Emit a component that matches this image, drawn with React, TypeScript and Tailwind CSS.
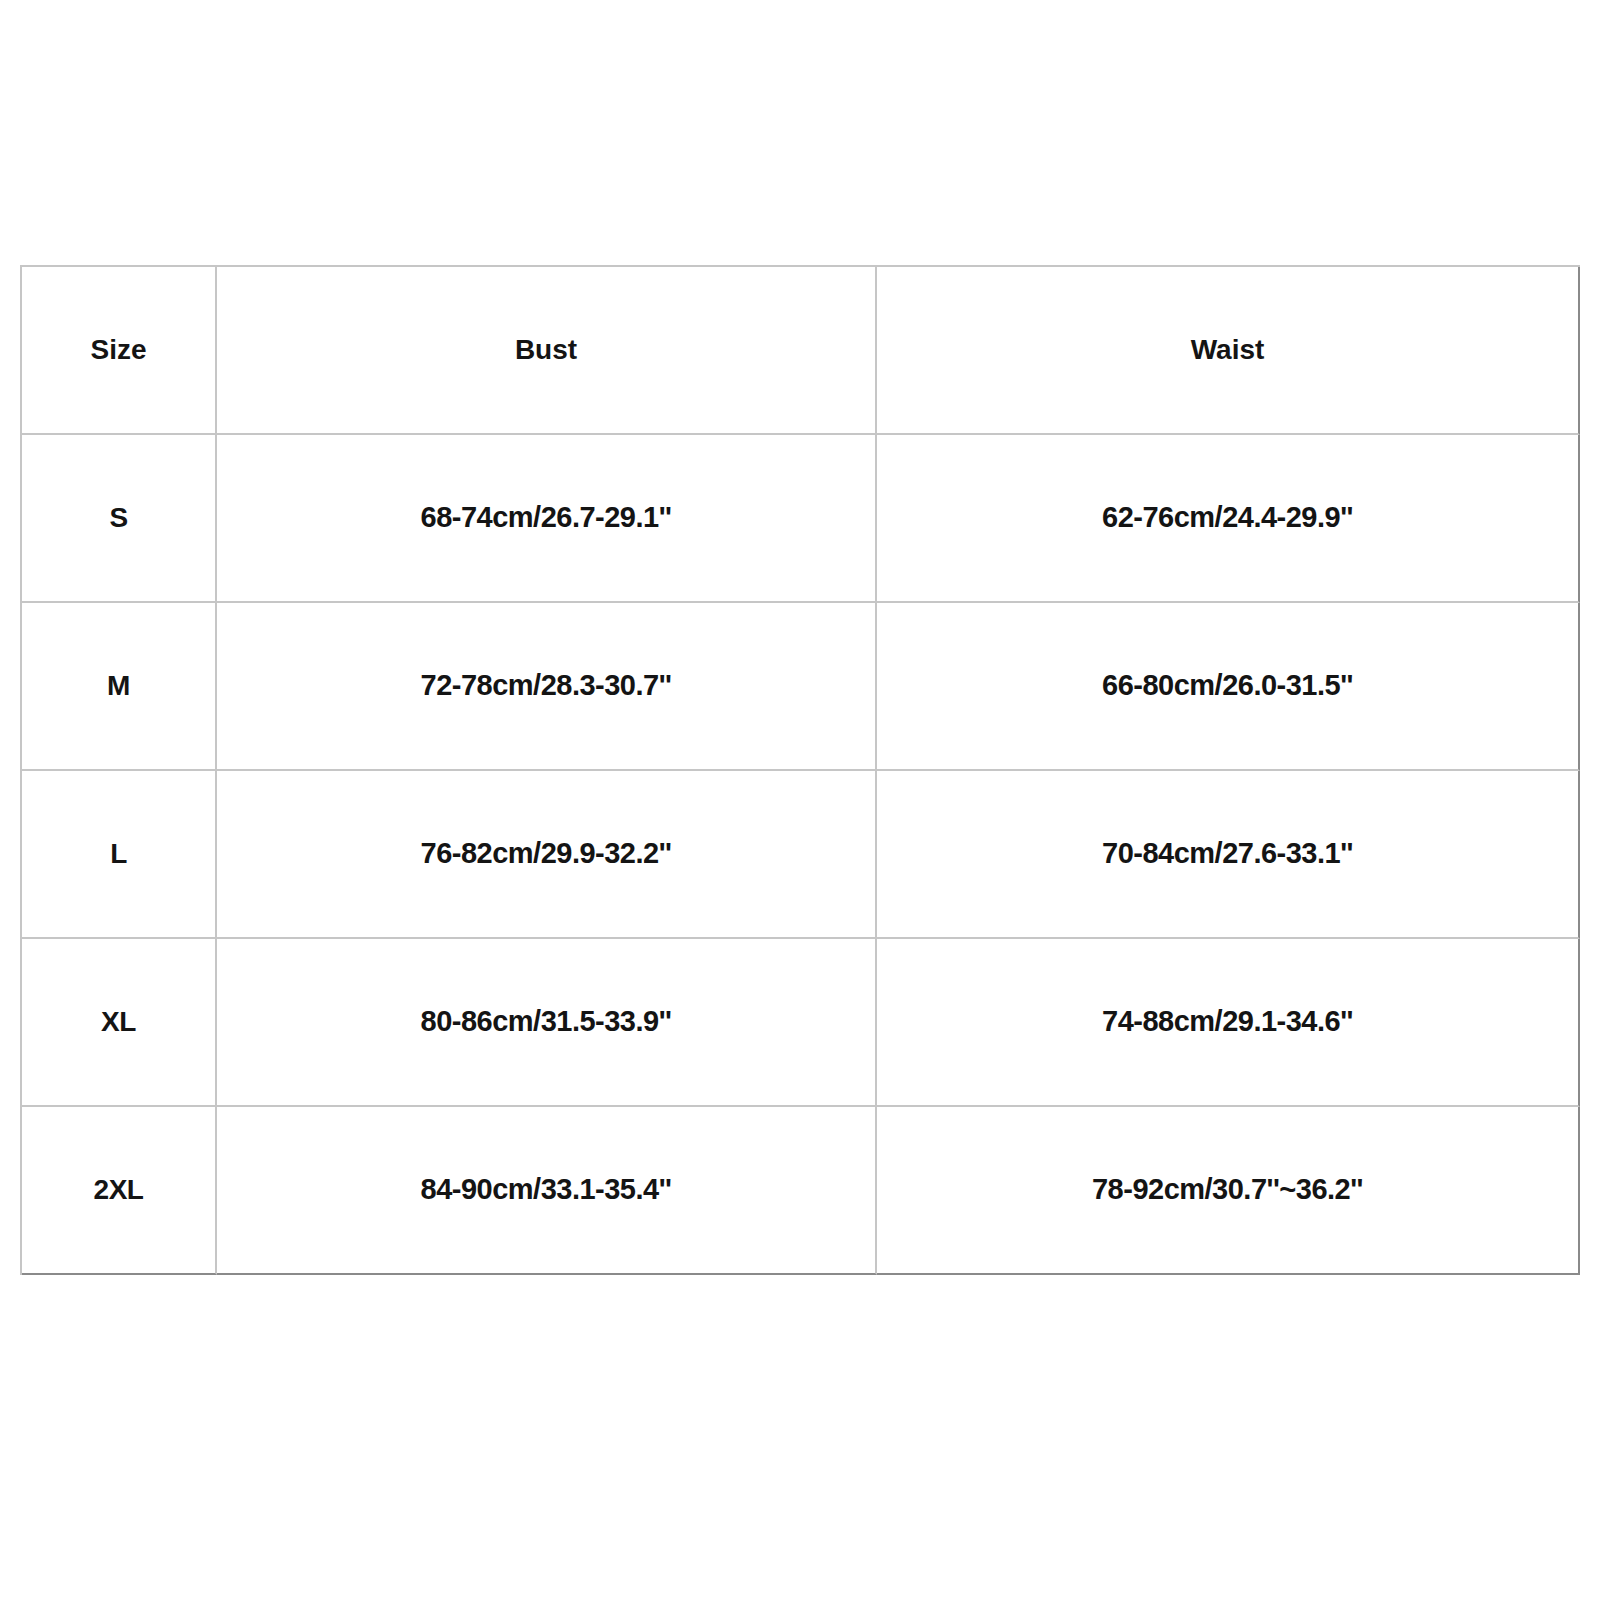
const rows = [
  { size: "S", bust: "68-74cm/26.7-29.1''", waist: "62-76cm/24.4-29.9''" },
  { size: "M", bust: "72-78cm/28.3-30.7''", waist: "66-80cm/26.0-31.5''" },
  { size: "L", bust: "76-82cm/29.9-32.2''", waist: "70-84cm/27.6-33.1''" },
  { size: "XL", bust: "80-86cm/31.5-33.9''", waist: "74-88cm/29.1-34.6''" },
  { size: "2XL", bust: "84-90cm/33.1-35.4''", waist: "78-92cm/30.7''~36.2''" },
];

export default function App() {
  return (
    <div className="min-h-[1600px] bg-white pt-[265px] pl-[20px] font-['Liberation_Sans',Arial,sans-serif] font-bold text-[#141414]">
      <div className="grid w-[1560px] grid-cols-[195px_660px_1fr] border-l-2 border-t-2 border-[#c6c6c6]">
        {/* header */}
        <div className="flex h-[168px] items-center justify-center border-b-2 border-r-2 border-[#c6c6c6] text-[28px]">
          Size
        </div>
        <div className="flex h-[168px] items-center justify-center border-b-2 border-r-2 border-[#c6c6c6] text-[28px]">
          Bust
        </div>
        <div className="flex h-[168px] items-center justify-center border-b-2 border-r-2 border-[#c6c6c6] border-r-[#8a8a8a] text-[28px]">
          Waist
        </div>

        {rows.map((r, i) => {
          const last = i === rows.length - 1;
          return (
            <div key={r.size} className="contents">
              <div
                className={
                  "flex h-[168px] items-center justify-center border-b-2 border-r-2 border-[#c6c6c6] text-[28px] tracking-[-0.5px]" +
                  (last ? " border-b-[#8a8a8a]" : "")
                }
              >
                {r.size}
              </div>
              <div
                className={
                  "flex h-[168px] items-center justify-center border-b-2 border-r-2 border-[#c6c6c6] text-[29px] tracking-[-0.5px]" +
                  (last ? " border-b-[#8a8a8a]" : "")
                }
              >
                {r.bust}
              </div>
              <div
                className={
                  "flex h-[168px] items-center justify-center border-b-2 border-r-2 border-[#c6c6c6] border-r-[#8a8a8a] text-[29px] tracking-[-0.5px]" +
                  (last ? " border-b-[#8a8a8a]" : "")
                }
              >
                {r.waist}
              </div>
            </div>
          );
        })}
      </div>
    </div>
  );
}
